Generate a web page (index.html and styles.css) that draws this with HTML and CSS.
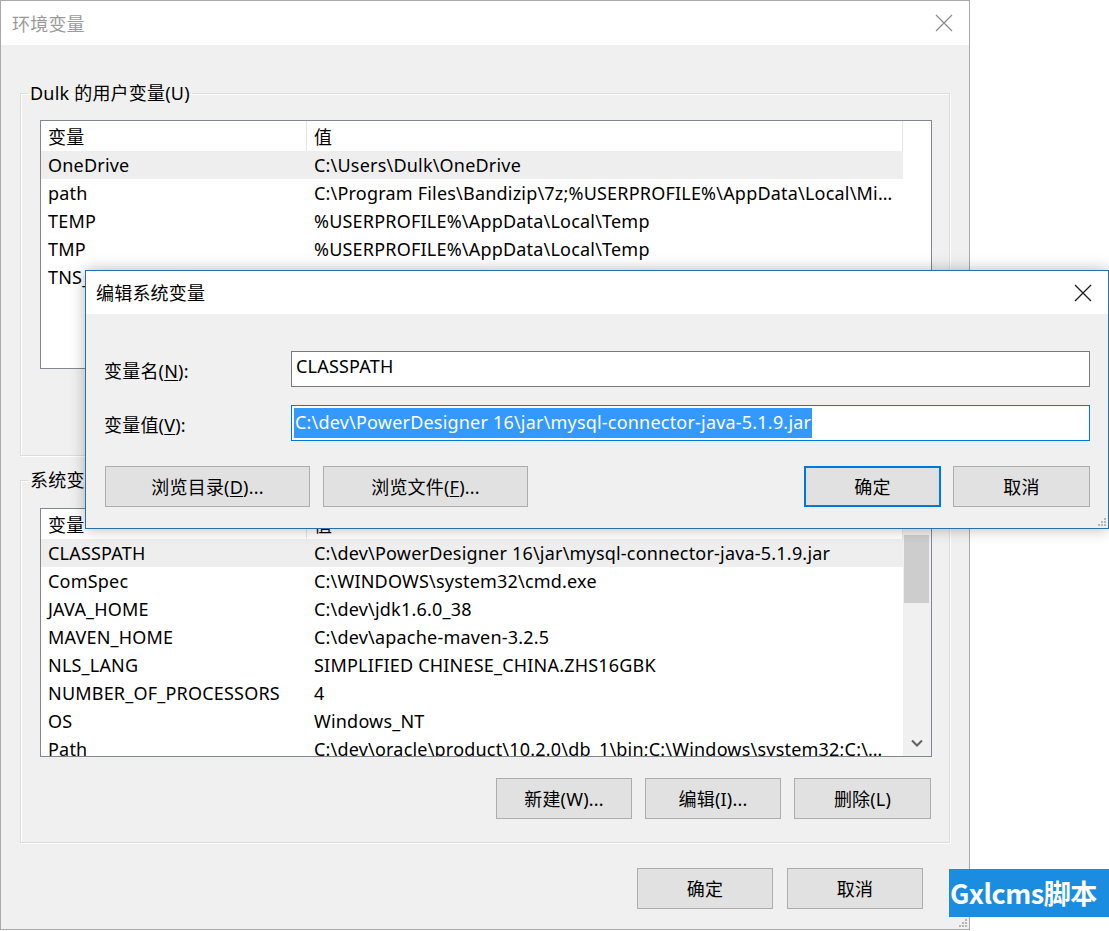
FILE: index.html
```html
<!DOCTYPE html>
<html lang="zh-CN">
<head>
<meta charset="utf-8">
<title>环境变量</title>
<link rel="stylesheet" href="styles.css">
</head>
<body>
<div class="screen">
  <div class="win">
    <div class="titlebar">
      <span class="title">环境变量</span>
      <svg class="close close-inactive" width="18" height="18" viewBox="0 0 18 18"><path d="M1 1L17 17M17 1L1 17" stroke="#8a8a8a" stroke-width="1.2" fill="none"/></svg>
    </div>
    <div class="winbody">
      <fieldset class="group g1">
        <legend>Dulk 的用户变量(U)</legend>
        <div class="list">
          <div class="lv">
            <div class="hdr"><div class="hc c1">变量</div><div class="hc c2">值</div></div>
            <div class="row sel"><div class="cell c1">OneDrive</div><div class="cell c2">C:\Users\Dulk\OneDrive</div></div>
            <div class="row"><div class="cell c1">path</div><div class="cell c2">C:\Program Files\Bandizip\7z;%USERPROFILE%\AppData\Local\Microsoft\WindowsApps</div></div>
            <div class="row"><div class="cell c1">TEMP</div><div class="cell c2">%USERPROFILE%\AppData\Local\Temp</div></div>
            <div class="row"><div class="cell c1">TMP</div><div class="cell c2">%USERPROFILE%\AppData\Local\Temp</div></div>
            <div class="row"><div class="cell c1">TNS_ADMIN</div><div class="cell c2">C:\dev\oracle\product\10.2.0\db_1\NETWORK\ADMIN</div></div>
          </div>
          <div class="lv-rest"></div>
        </div>
        <div class="btnrow">
          <button class="btn w136">新建(N)...</button>
          <button class="btn w136">编辑(E)...</button>
          <button class="btn w137">删除(D)</button>
        </div>
      </fieldset>

      <fieldset class="group g2">
        <legend>系统变量(S)</legend>
        <div class="list">
          <div class="lv">
            <div class="hdr"><div class="hc c1">变量</div><div class="hc c2">值</div></div>
            <div class="row sel"><div class="cell c1">CLASSPATH</div><div class="cell c2">C:\dev\PowerDesigner 16\jar\mysql-connector-java-5.1.9.jar</div></div>
            <div class="row"><div class="cell c1">ComSpec</div><div class="cell c2">C:\WINDOWS\system32\cmd.exe</div></div>
            <div class="row"><div class="cell c1">JAVA_HOME</div><div class="cell c2">C:\dev\jdk1.6.0_38</div></div>
            <div class="row"><div class="cell c1">MAVEN_HOME</div><div class="cell c2">C:\dev\apache-maven-3.2.5</div></div>
            <div class="row"><div class="cell c1">NLS_LANG</div><div class="cell c2">SIMPLIFIED CHINESE_CHINA.ZHS16GBK</div></div>
            <div class="row"><div class="cell c1">NUMBER_OF_PROCESSORS</div><div class="cell c2">4</div></div>
            <div class="row"><div class="cell c1">OS</div><div class="cell c2">Windows_NT</div></div>
            <div class="row"><div class="cell c1">Path</div><div class="cell c2">C:\dev\oracle\product\10.2.0\db_1\bin;C:\Windows\system32;C:\Windows;C:\Windows\System32\Wbem</div></div>
          </div>
          <div class="vscroll">
            <div class="sb-up"></div>
            <div class="sb-thumb"></div>
            <div class="sb-track"></div>
            <div class="sb-down">
              <svg width="12" height="8" viewBox="0 0 12 8"><path d="M1 1.5L6 6.5L11 1.5" stroke="#606060" stroke-width="2" fill="none"/></svg>
            </div>
          </div>
        </div>
        <div class="btnrow">
          <button class="btn w136">新建(W)...</button>
          <button class="btn w136">编辑(I)...</button>
          <button class="btn w137">删除(L)</button>
        </div>
      </fieldset>

      <div class="btnrow bottom">
        <button class="btn w136">确定</button>
        <button class="btn w136">取消</button>
      </div>
    </div>
    <svg class="grip grip-main" width="8" height="8" viewBox="0 0 8 8"><g fill="#b5b5b5"><rect x="6" y="0" width="2" height="2"/><rect x="3" y="3" width="2" height="2"/><rect x="6" y="3" width="2" height="2"/><rect x="0" y="6" width="2" height="2"/><rect x="3" y="6" width="2" height="2"/><rect x="6" y="6" width="2" height="2"/></g></svg>
  </div>

  <div class="dlg">
    <div class="dlg-title">
      <span class="title-dark">编辑系统变量</span>
      <svg class="close" width="18" height="18" viewBox="0 0 18 18"><path d="M1 1L17 17M17 1L1 17" stroke="#1a1a1a" stroke-width="1.2" fill="none"/></svg>
    </div>
    <div class="dlg-body">
      <div class="field">
        <label class="flabel">变量名(<u>N</u>):</label>
        <div class="input">CLASSPATH</div>
      </div>
      <div class="field f2">
        <label class="flabel">变量值(<u>V</u>):</label>
        <div class="input focus"><span class="selection">C:\dev\PowerDesigner 16\jar\mysql-connector-java-5.1.9.jar</span></div>
      </div>
      <div class="dlg-btns">
        <button class="btn w205">浏览目录(<u>D</u>)...</button>
        <button class="btn w205">浏览文件(<u>F</u>)...</button>
        <span class="spacer"></span>
        <button class="btn w137 default">确定</button>
        <button class="btn w137">取消</button>
      </div>
    </div>
    <svg class="grip grip-dlg" width="8" height="8" viewBox="0 0 8 8"><g fill="#b5b5b5"><rect x="6" y="0" width="2" height="2"/><rect x="3" y="3" width="2" height="2"/><rect x="6" y="3" width="2" height="2"/><rect x="0" y="6" width="2" height="2"/><rect x="3" y="6" width="2" height="2"/><rect x="6" y="6" width="2" height="2"/></g></svg>
  </div>

  <div class="watermark">Gxlcms脚本</div>
</div>
</body>
</html>
```

FILE: styles.css
```css
* { box-sizing: border-box; }

html, body {
  margin: 0;
  padding: 0;
  background: #ffffff;
}

body {
  font-family: "Noto Sans", "Noto Sans CJK SC", sans-serif;
  font-size: 18px;
  letter-spacing: 0.2px;
  color: #000;
}

.screen {
  position: relative;
  width: 1109px;
  height: 931px;
  overflow: hidden;
}

/* main window */
.win {
  position: relative;
  width: 970px;
  height: 930px;
  border: 1px solid #aaaaaa;
  background: #f0f0f0;
  display: flex;
  flex-direction: column;
}

.titlebar {
  height: 44px;
  background: #fff;
  display: flex;
  align-items: center;
  justify-content: space-between;
  padding: 0 16px 0 11px;
  flex: none;
}

.title {
  color: #9a9a9a;
  font-family: "Noto Sans CJK SC", sans-serif;
  line-height: 24px;
  margin-top: -1px;
}

.winbody {
  padding: 36px 0 0 19px;
  display: flex;
  flex-direction: column;
}

.group {
  width: 930px;
  margin: 0;
  border: 1px solid #dcdcdc;
  box-shadow: inset 1px 1px 0 #fff, 1px 1px 0 #fff;
  padding: 15px 17px 23px 19px;
  min-width: 0;
}

.g1 { padding-bottom: 24px; }
.g2 { margin-top: 12px; padding-top: 16px; }

.group legend {
  margin-left: -12px;
  padding: 0 2px;
  line-height: 24px;
  font-family: "Noto Sans", "Noto Sans CJK SC", sans-serif;
}

.list {
  width: 892px;
  height: 249px;
  border: 1px solid #828790;
  background: #fff;
  display: flex;
  overflow: hidden;
}

.lv {
  width: 862px;
  flex: none;
  display: flex;
  flex-direction: column;
}

.lv-rest {
  flex: 1;
  background: #fff;
}

.hdr {
  height: 30px;
  display: flex;
  flex: none;
}

.hc {
  height: 30px;
  line-height: 30px;
  padding: 0 7px;
  border-right: 1px solid #e5e5e5;
  font-family: "Noto Sans CJK SC", sans-serif;
}

.c1 { width: 266px; flex: none; }
.c2 { width: 596px; flex: none; }

.row {
  height: 28px;
  display: flex;
  flex: none;
}

.row.sel { background: #eeeeee; }

.cell {
  line-height: 28px;
  padding: 0 7px;
  white-space: nowrap;
  overflow: hidden;
  text-overflow: ellipsis;
}

.vscroll {
  flex: 1;
  background: #f0f0f0;
  display: flex;
  flex-direction: column;
}

.sb-up { height: 26px; flex: none; }
.sb-thumb {
  height: 68px;
  flex: none;
  margin: 0 2px 0 1px;
  background: #cdcdcd;
}
.sb-track { flex: 1; }
.sb-down {
  height: 26px;
  flex: none;
  display: flex;
  align-items: center;
  justify-content: center;
  padding-right: 1px;
}

.btnrow {
  display: flex;
  justify-content: flex-end;
  gap: 13px;
  margin-top: 21px;
  padding-right: 1px;
}

.btnrow.bottom {
  margin-top: 25px;
  width: 930px;
  padding-right: 27px;
  gap: 14px;
}

.btn {
  height: 41px;
  background: #e1e1e1;
  border: 1px solid #adadad;
  font-family: "Noto Sans", "Noto Sans CJK SC", sans-serif;
  font-size: 18px;
  letter-spacing: 0.2px;
  color: #000;
  padding: 0 0 2px;
  margin: 0;
}

.btn u { text-decoration: underline; text-underline-offset: 2px; }

.w136 { width: 136px; }
.w137 { width: 137px; }
.w205 { width: 205px; }

.btn.default {
  border: 2px solid #0078d7;
}

.grip { position: absolute; }
.grip-main { right: 2px; bottom: 2px; }
.grip-dlg { right: 2px; bottom: 2px; }

/* edit dialog */
.dlg {
  position: absolute;
  left: 85px;
  top: 270px;
  width: 1024px;
  height: 259px;
  border: 1px solid #2a6fa6;
  background: #f0f0f0;
  box-shadow: 0 0 14px rgba(0, 0, 0, 0.28);
  display: flex;
  flex-direction: column;
}

.dlg-title {
  height: 43px;
  flex: none;
  background: #fff;
  display: flex;
  align-items: center;
  justify-content: space-between;
  padding: 0 16px 0 10px;
}

.title-dark {
  font-family: "Noto Sans CJK SC", sans-serif;
  line-height: 24px;
  color: #000;
  margin-top: -2px;
}

.dlg-body {
  padding: 37px 18px 0 18px;
  display: flex;
  flex-direction: column;
}

.field {
  display: flex;
  align-items: center;
  height: 36px;
}

.field.f2 { margin-top: 18px; }

.flabel {
  width: 187px;
  flex: none;
  padding-top: 1px;
}

.flabel u { text-underline-offset: 2px; }

.input {
  width: 799px;
  height: 36px;
  border: 1px solid #7a7a7a;
  background: #fff;
  padding: 0 4px;
  line-height: 28px;
  white-space: nowrap;
}

.input.focus {
  border-color: #0078d7;
  padding: 2px 2px;
}

.selection {
  display: inline-block;
  background: #3399ff;
  color: #fff;
  height: 30px;
  line-height: 28px;
  padding: 0 1px;
}

.dlg-btns {
  display: flex;
  margin-top: 25px;
  gap: 13px;
  padding-left: 1px;
}

.dlg-btns .spacer { flex: 1; }
.dlg-btns .btn.default { margin-right: -1px; }

.watermark {
  position: absolute;
  left: 949px;
  top: 869px;
  width: 160px;
  height: 48px;
  background: #1b8de0;
  color: #fff;
  font-family: "Noto Sans CJK SC", sans-serif;
  font-weight: 700;
  font-size: 27px;
  line-height: 48px;
  padding-left: 1px;
  white-space: nowrap;
  letter-spacing: -0.5px;
  overflow: hidden;
}
```
